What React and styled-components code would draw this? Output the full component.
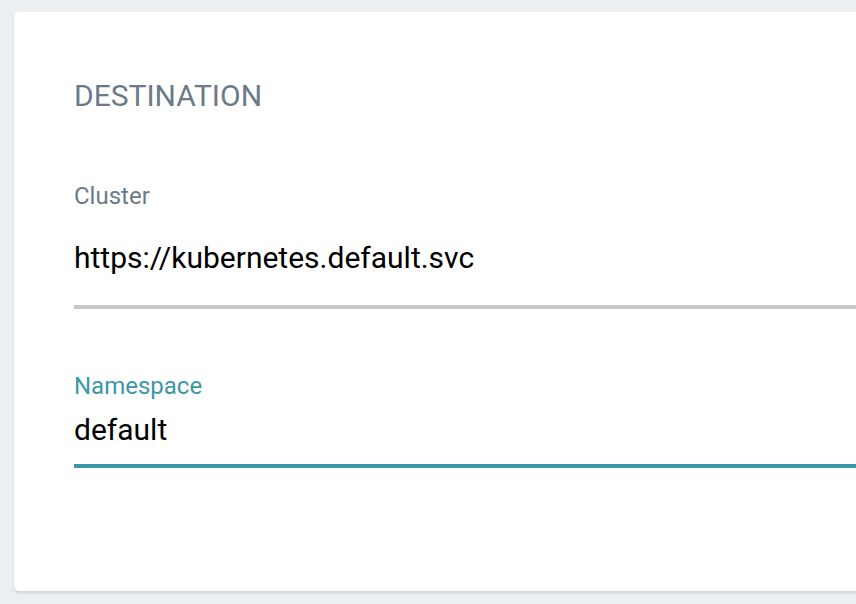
import React from "react";
import styled, { createGlobalStyle } from "styled-components";

const GlobalStyle = createGlobalStyle`
  html, body {
    margin: 0;
    padding: 0;
    background: #eceff2;
    font-family: Roboto, "Liberation Sans", sans-serif;
    overflow: hidden;
  }
`;

const Page = styled.div`
  width: 856px;
  height: 604px;
  padding: 12px 0 0 14px;
  box-sizing: border-box;
  overflow: hidden;
`;

const Card = styled.div`
  width: 900px;
  height: 579px;
  box-sizing: border-box;
  background: #fff;
  border-radius: 5px;
  box-shadow: 0 2px 3px rgba(0, 0, 0, 0.12);
  padding: 67px 0 0 60px;
`;

const Title = styled.h2`
  margin: 0 0 69px;
  font-size: 30px;
  font-weight: 400;
  line-height: 34px;
  color: #6b7a89;
`;

const Field = styled.div`
  width: 782px;
  margin-bottom: ${(p) => p.gap || 0}px;
`;

const Label = styled.div`
  font-size: 24px;
  line-height: 28px;
  color: ${(p) => (p.focused ? "#3c97a8" : "#6b7a89")};
`;

const Value = styled.div`
  font-size: 30px;
  line-height: 34px;
  color: #000;
  margin-top: ${(p) => p.offset}px;
  padding-bottom: ${(p) => p.below}px;
  border-bottom: 4px solid ${(p) => (p.focused ? "#3c97a8" : "#c8c8c8")};
`;

export default function App() {
  return (
    <Page>
      <GlobalStyle />
      <Card>
        <Title>DESTINATION</Title>
        <Field gap={63}>
          <Label>Cluster</Label>
          <Value offset={31} below={30}>https://kubernetes.default.svc</Value>
        </Field>
        <Field>
          <Label focused>Namespace</Label>
          <Value focused offset={13} below={17}>default</Value>
        </Field>
      </Card>
    </Page>
  );
}
